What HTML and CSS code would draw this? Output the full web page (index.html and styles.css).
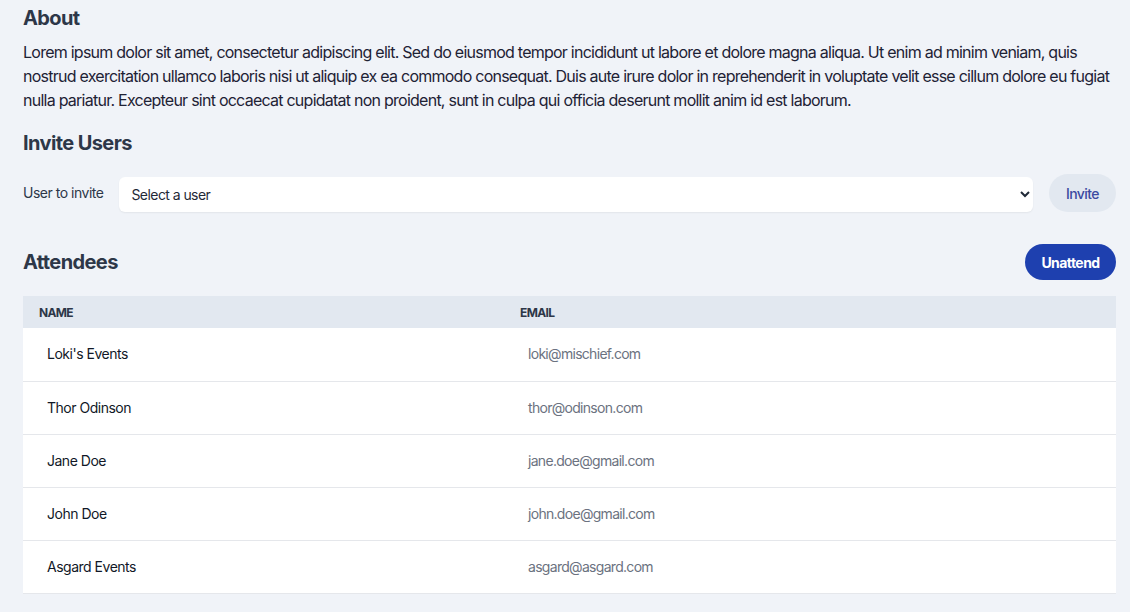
FILE: index.html
```html
<!DOCTYPE html>
<html lang="en">
<head>
<meta charset="utf-8">
<title>Event</title>
<link rel="stylesheet" href="styles.css">
</head>
<body>
<main class="page">
  <section class="about">
    <h2 class="heading">About</h2>
    <p class="about-text">Lorem ipsum dolor sit amet, consectetur adipiscing elit. Sed do eiusmod tempor incididunt ut labore et dolore magna aliqua. Ut enim ad minim veniam, quis nostrud exercitation ullamco laboris nisi ut aliquip ex ea commodo consequat. Duis aute irure dolor in reprehenderit in voluptate velit esse cillum dolore eu fugiat nulla pariatur. Excepteur sint occaecat cupidatat non proident, sunt in culpa qui officia deserunt mollit anim id est laborum.</p>
  </section>

  <section class="invite">
    <h2 class="heading">Invite Users</h2>
    <div class="invite-row">
      <label class="invite-label" for="user">User to invite</label>
      <select class="invite-select" id="user">
        <option>Select a user</option>
      </select>
      <button class="btn btn-light">Invite</button>
    </div>
  </section>

  <section class="attendees">
    <div class="attendees-head">
      <h2 class="heading">Attendees</h2>
      <button class="btn btn-primary">Unattend</button>
    </div>
    <table class="table">
      <colgroup><col class="col-name"><col></colgroup>
      <thead>
        <tr><th>Name</th><th>Email</th></tr>
      </thead>
      <tbody>
        <tr><td class="name">Loki's Events</td><td class="email">loki@mischief.com</td></tr>
        <tr><td class="name">Thor Odinson</td><td class="email">thor@odinson.com</td></tr>
        <tr><td class="name">Jane Doe</td><td class="email">jane.doe@gmail.com</td></tr>
        <tr><td class="name">John Doe</td><td class="email">john.doe@gmail.com</td></tr>
        <tr><td class="name">Asgard Events</td><td class="email">asgard@asgard.com</td></tr>
      </tbody>
    </table>
  </section>
</main>
</body>
</html>
```

FILE: styles.css
```css
* { box-sizing: border-box; }
html, body {
  margin: 0;
  background: #f0f3f8;
  font-family: Inter, "Noto Sans", sans-serif;
  color: #1f2937;
  letter-spacing: -0.04em;
}
.page {
  padding: 4px 14px 20px 23px;
}
.heading {
  margin: 0;
  font-size: 20px;
  line-height: 28px;
  font-weight: 700;
  color: #2d3748;
  letter-spacing: -0.03em;
}
.about-text {
  margin: 8px 0 0;
  font-size: 16px;
  line-height: 24px;
  color: #1e2235;
  letter-spacing: -0.047em;
}
.invite {
  margin-top: 17px;
}
.invite-row {
  margin-top: 17px;
  display: flex;
  align-items: center;
  gap: 16px;
}
.invite-label {
  font-size: 14px;
  line-height: 20px;
  color: #2d3748;
  letter-spacing: -0.035em;
}
.invite-select {
  flex: 1;
  height: 35px;
  margin-top: 3px;
  border: none;
  border-radius: 6px;
  background: #fff;
  padding: 0 6px 0 8px;
  font-family: Inter, sans-serif;
  font-size: 14px;
  letter-spacing: -0.04em;
  color: #1f2937;
  box-shadow: 0 1px 2px rgba(0, 0, 0, 0.06);
}
.btn {
  border: none;
  border-radius: 999px;
  font-family: Inter, sans-serif;
  font-size: 14px;
  letter-spacing: -0.04em;
  cursor: pointer;
}
.btn-light {
  height: 38px;
  width: 67px;
  background: #e2e8f0;
  color: #3b4aa0;
  font-weight: 500;
}
.btn-primary {
  height: 36px;
  width: 91px;
  background: #1e40af;
  color: #fff;
  font-weight: 700;
}
.attendees {
  margin-top: 32px;
}
.attendees-head {
  display: flex;
  justify-content: space-between;
  align-items: center;
}
.table {
  margin-top: 16px;
  width: 100%;
  border-collapse: collapse;
  background: #fff;
}
.col-name { width: 481px; }
.table th {
  background: #e2e8f0;
  height: 32px;
  padding: 0 16px;
  text-align: left;
  font-size: 12px;
  font-weight: 700;
  text-transform: uppercase;
  color: #2d3748;
}
.table td {
  height: 53px;
  padding: 0 24px 1px;
  font-size: 14px;
  border-bottom: 1px solid #e5e7eb;
}
.name { color: #111827; letter-spacing: -0.035em; }
.email { color: #6b7280; letter-spacing: -0.05em; }
```
